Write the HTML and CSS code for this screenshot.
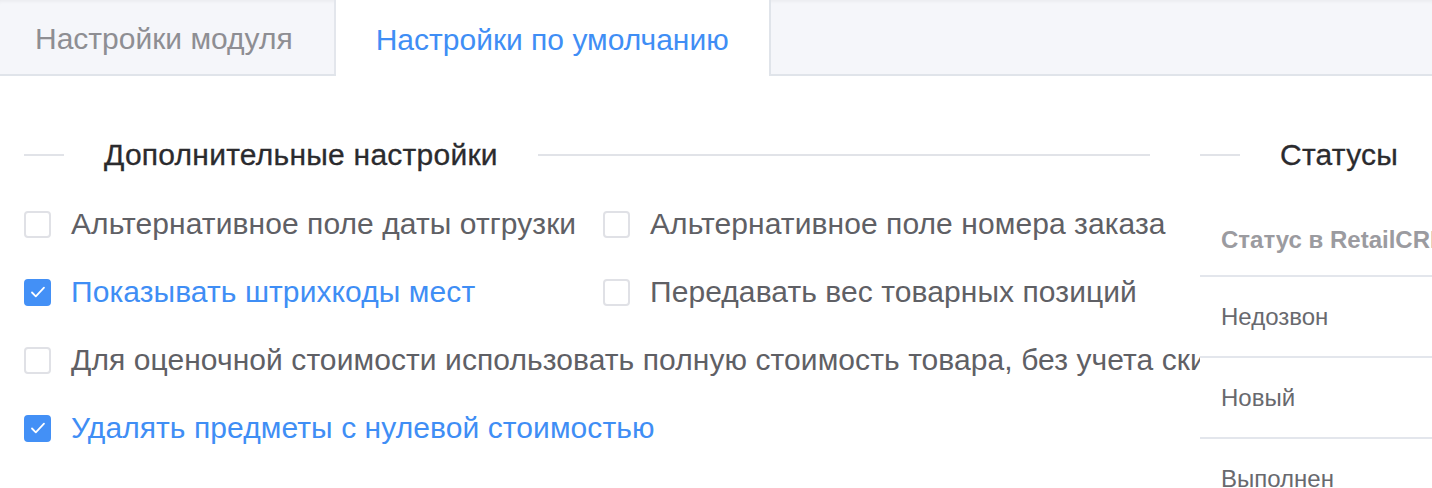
FILE: index.html
```html
<!DOCTYPE html>
<html lang="ru">
<head>
  <meta charset="UTF-8">
  <meta name="viewport" content="width=device-width, initial-scale=1">
  <title>Настройки по умолчанию</title>
  <link rel="stylesheet" href="styles.css">
</head>
<body>

  <div class="tabs">
    <div class="tab">Настройки модуля</div>
    <div class="tab tab-active">Настройки по умолчанию</div>
    <div class="tabs-rest"></div>
  </div>

  <div class="content">
    <div class="settings">
      <div class="section-title"><span>Дополнительные настройки</span></div>

      <div class="options">
        <label class="option">
          <span class="box"></span>
          Альтернативное поле даты отгрузки
        </label>
        <label class="option">
          <span class="box"></span>
          Альтернативное поле номера заказа
        </label>
        <label class="option checked">
          <span class="box"><svg viewBox="0 0 20 20" width="20" height="20"><path d="M4 10.5l3.8 3.8 8.2-8.6" fill="none" stroke="#fff" stroke-width="1.8" stroke-linecap="round" stroke-linejoin="round"/></svg></span>
          Показывать штрихкоды мест
        </label>
        <label class="option">
          <span class="box"></span>
          Передавать вес товарных позиций
        </label>
        <label class="option option-wide">
          <span class="box"></span>
          Для оценочной стоимости использовать полную стоимость товара, без учета скидки
        </label>
        <label class="option option-wide checked">
          <span class="box"><svg viewBox="0 0 20 20" width="20" height="20"><path d="M4 10.5l3.8 3.8 8.2-8.6" fill="none" stroke="#fff" stroke-width="1.8" stroke-linecap="round" stroke-linejoin="round"/></svg></span>
          Удалять предметы с нулевой стоимостью
        </label>
      </div>
    </div>

    <div class="statuses">
      <div class="section-title"><span>Статусы</span></div>
      <table class="status-table">
        <thead>
          <tr><th>Статус в RetailCRM</th></tr>
        </thead>
        <tbody>
          <tr><td>Недозвон</td></tr>
          <tr><td>Новый</td></tr>
          <tr><td>Выполнен</td></tr>
        </tbody>
      </table>
    </div>
  </div>

</body>
</html>
```

FILE: styles.css
```css
body {
  margin: 0;
  font-family: 'Liberation Sans', Arial, sans-serif;
  background: #fff;
  color: #333;
  overflow: hidden;
}
.tabs {
  display: flex;
  height: 74px;
  background: #f5f6fa;
  border-bottom: 2px solid #e0e4ea;
  box-shadow: inset 0 4px 4px -3px rgba(0, 0, 0, 0.06);
}
.tab {
  display: flex;
  align-items: center;
  padding: 4px 41px 0 35px;
  font-size: 30px;
  color: #8e8e93;
  border-right: 2px solid #e3e6ec;
}
.tab-active {
  background: #fff;
  color: #3f8ef5;
  padding: 4px 40px 0 40px;
  height: 76px;
  box-sizing: border-box;
  border-right: 2px solid #e0e4ea;
}
.tabs-rest {
  flex: 1;
}
.content {
  display: flex;
  margin-top: 64px;
}
.settings {
  width: 1200px;
  flex-shrink: 0;
  box-sizing: border-box;
  padding: 0 50px 0 24px;
  overflow: hidden;
}
.section-title {
  display: flex;
  align-items: center;
  height: 30px;
  font-size: 30px;
  letter-spacing: 0.25px;
  color: #2b2b2e;
  -webkit-text-stroke: 0.3px #2b2b2e;
}
.section-title::before {
  content: "";
  flex-shrink: 0;
  width: 40px;
  height: 2px;
  background: #e1e3e8;
}
.section-title span {
  padding: 0 40px;
  white-space: nowrap;
}
.section-title::after {
  content: "";
  flex: 1;
  height: 2px;
  background: #e1e3e8;
}
.options {
  display: grid;
  grid-template-columns: 579px 1fr;
  margin-top: 20px;
}
.option {
  display: flex;
  align-items: center;
  height: 68px;
  font-size: 30px;
  letter-spacing: 0.08px;
  color: #5f6065;
  white-space: nowrap;
  cursor: pointer;
}
.option-wide {
  grid-column: 1 / -1;
}
.option.checked {
  color: #3f8ef5;
}
.box {
  width: 27px;
  height: 27px;
  box-sizing: border-box;
  border: 2px solid #e0e1e6;
  border-radius: 4px;
  margin-right: 20px;
  display: flex;
  align-items: center;
  justify-content: center;
  flex-shrink: 0;
}
.checked .box {
  background: #4390f6;
  border-color: #4390f6;
}
.statuses {
  flex: 1;
  min-width: 0;
}
.statuses .section-title::after {
  display: none;
}
.status-table {
  width: 100%;
  margin-top: 30px;
  border-collapse: collapse;
  white-space: nowrap;
}
.status-table th,
.status-table td {
  text-align: left;
  padding: 28px 0 27px 21px;
  font-size: 24px;
  line-height: 24px;
  border-bottom: 2px solid #e3e6ec;
}
.status-table th {
  font-weight: bold;
  color: #9b9ba0;
  padding-bottom: 23px;
}
.status-table td {
  color: #68696e;
}
```
